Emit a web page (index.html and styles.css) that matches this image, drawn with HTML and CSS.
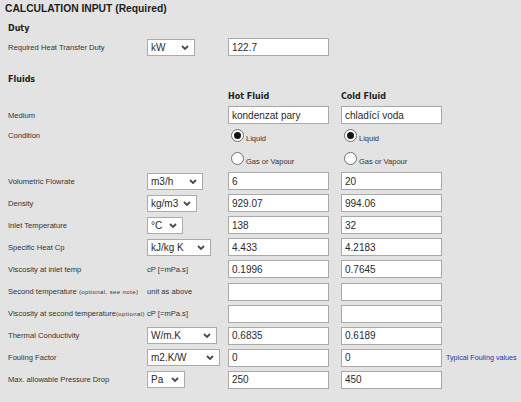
FILE: index.html
```html
<!DOCTYPE html>
<html>
<head>
<meta charset="utf-8">
<title>Calculation input</title>
<link rel="stylesheet" href="styles.css">
</head>
<body>
<div class="page">
  <h1 class="title">CALCULATION INPUT (Required)</h1>

  <h2 class="section section-duty">Duty</h2>
  <div class="row row-duty">
    <span class="label">Required Heat Transfer Duty</span>
    <span class="unit"><span class="select sel-48">kW<svg class="chev" viewBox="0 0 8 5"><path d="M1 1 L4 4 L7 1"/></svg></span></span>
    <span class="cell"><input class="field" type="text" value="122.7"></span>
  </div>

  <h2 class="section section-fluids">Fluids</h2>
  <div class="row row-head">
    <span></span><span></span>
    <span class="colhead">Hot Fluid</span>
    <span class="colhead">Cold Fluid</span>
  </div>
  <div class="row row-medium">
    <span class="label">Medium</span><span></span>
    <span class="cell"><input class="field" type="text" value="kondenzat pary"></span>
    <span class="cell"><input class="field" type="text" value="chladící voda"></span>
  </div>
  <div class="row row-radio">
    <span class="label">Condition</span><span></span>
    <span class="opt"><span class="radio checked"></span><span class="opt-text">Liquid</span></span>
    <span class="opt"><span class="radio checked"></span><span class="opt-text">Liquid</span></span>
  </div>
  <div class="row row-radio">
    <span></span><span></span>
    <span class="opt"><span class="radio"></span><span class="opt-text">Gas or Vapour</span></span>
    <span class="opt"><span class="radio"></span><span class="opt-text">Gas or Vapour</span></span>
  </div>

  <div class="props">
    <div class="row prop">
      <span class="label">Volumetric Flowrate</span>
      <span class="unit"><span class="select sel-56">m3/h<svg class="chev" viewBox="0 0 8 5"><path d="M1 1 L4 4 L7 1"/></svg></span></span>
      <span class="cell"><input class="field" type="text" value="6"></span>
      <span class="cell"><input class="field" type="text" value="20"></span>
    </div>
    <div class="row prop">
      <span class="label">Density</span>
      <span class="unit"><span class="select sel-50">kg/m3<svg class="chev" viewBox="0 0 8 5"><path d="M1 1 L4 4 L7 1"/></svg></span></span>
      <span class="cell"><input class="field" type="text" value="929.07"></span>
      <span class="cell"><input class="field" type="text" value="994.06"></span>
    </div>
    <div class="row prop">
      <span class="label">Inlet Temperature</span>
      <span class="unit"><span class="select sel-36">°C<svg class="chev" viewBox="0 0 8 5"><path d="M1 1 L4 4 L7 1"/></svg></span></span>
      <span class="cell"><input class="field" type="text" value="138"></span>
      <span class="cell"><input class="field" type="text" value="32"></span>
    </div>
    <div class="row prop">
      <span class="label">Specific Heat Cp</span>
      <span class="unit"><span class="select sel-64">kJ/kg K<svg class="chev" viewBox="0 0 8 5"><path d="M1 1 L4 4 L7 1"/></svg></span></span>
      <span class="cell"><input class="field" type="text" value="4.433"></span>
      <span class="cell"><input class="field" type="text" value="4.2183"></span>
    </div>
    <div class="row prop">
      <span class="label">Viscosity at inlet temp</span>
      <span class="unit-text">cP [=mPa.s]</span>
      <span class="cell"><input class="field" type="text" value="0.1996"></span>
      <span class="cell"><input class="field" type="text" value="0.7645"></span>
    </div>
    <div class="row prop">
      <span class="label">Second temperature <small class="note">(optional, see note)</small></span>
      <span class="unit-text">unit as above</span>
      <span class="cell"><input class="field" type="text" value=""></span>
      <span class="cell"><input class="field" type="text" value=""></span>
    </div>
    <div class="row prop">
      <span class="label">Viscosity at second temperature<small class="note">(optional)</small></span>
      <span class="unit-text">cP [=mPa.s]</span>
      <span class="cell"><input class="field" type="text" value=""></span>
      <span class="cell"><input class="field" type="text" value=""></span>
    </div>
    <div class="row prop">
      <span class="label">Thermal Conductivity</span>
      <span class="unit"><span class="select sel-70">W/m.K<svg class="chev" viewBox="0 0 8 5"><path d="M1 1 L4 4 L7 1"/></svg></span></span>
      <span class="cell"><input class="field" type="text" value="0.6835"></span>
      <span class="cell"><input class="field" type="text" value="0.6189"></span>
    </div>
    <div class="row prop">
      <span class="label">Fouling Factor</span>
      <span class="unit"><span class="select sel-73">m2.K/W<svg class="chev" viewBox="0 0 8 5"><path d="M1 1 L4 4 L7 1"/></svg></span></span>
      <span class="cell"><input class="field" type="text" value="0"></span>
      <span class="cell"><input class="field" type="text" value="0"></span>
      <a class="link" href="#">Typical Fouling values</a>
    </div>
    <div class="row prop">
      <span class="label">Max. allowable Pressure Drop</span>
      <span class="unit"><span class="select sel-38">Pa<svg class="chev" viewBox="0 0 8 5"><path d="M1 1 L4 4 L7 1"/></svg></span></span>
      <span class="cell"><input class="field" type="text" value="250"></span>
      <span class="cell"><input class="field" type="text" value="450"></span>
    </div>
  </div>
</div>
</body>
</html>
```

FILE: styles.css
```css
html, body {
  margin: 0;
  padding: 0;
  background: #e3e3e3;
}
body {
  width: 521px;
  height: 402px;
  overflow: hidden;
  color: #2a2a2a;
  font-family: "Liberation Sans", Arial, sans-serif;
}
.page {
  padding-left: 8px;
}
.title {
  margin: 0 0 0 -3px;
  height: 17px;
  line-height: 17px;
  font-family: "Liberation Sans", Arial, sans-serif;
  font-weight: bold;
  font-size: 10.3px;
  color: #1e1e1e;
}
.section {
  margin: 0;
  font-family: "DejaVu Sans", Verdana, sans-serif;
  font-weight: bold;
  font-size: 8px;
  color: #222;
}
.section-duty {
  height: 21px;
  line-height: 24px;
}
.section-fluids {
  margin-top: 14px;
  height: 18px;
  line-height: 20px;
}
.row {
  display: grid;
  grid-template-columns: 139px 81px 113px 103px auto;
  align-items: center;
  white-space: nowrap;
}
.row-duty { height: 18px; }
.row-head { height: 17px; line-height: 17px; }
.row-medium { height: 18px; margin-top: 1px; }
.row-radio { height: 23px; }
.props { margin-top: 0; }
.prop { height: 22.1px; }

.colhead {
  font-family: "DejaVu Sans", Verdana, sans-serif;
  font-weight: bold;
  font-size: 8px;
  color: #222;
}
.label, .unit-text {
  font-size: 7.6px;
  color: #333;
}
.note {
  font-size: 6px;
  letter-spacing: 0.4px;
}
.unit { display: flex; }
.select {
  box-sizing: border-box;
  height: 17px;
  display: flex;
  align-items: center;
  justify-content: space-between;
  padding: 0 5px 0 3px;
  background: #fff;
  border: 1px solid #ababab;
  font-size: 10px;
  color: #2a2a2a;
}
.sel-36 { width: 36px; }
.sel-38 { width: 38px; }
.sel-48 { width: 48px; }
.sel-50 { width: 50px; }
.sel-56 { width: 56px; }
.sel-64 { width: 64px; }
.sel-70 { width: 70px; }
.sel-73 { width: 73px; }
.chev {
  width: 8px;
  height: 5px;
  flex: none;
}
.chev path {
  fill: none;
  stroke: #4a4a4a;
  stroke-width: 1.8;
}
.cell { display: flex; }
.field {
  box-sizing: border-box;
  width: 101px;
  height: 18px;
  margin: 0;
  padding: 0 3px;
  border: 1px solid #a9a9a9;
  border-radius: 0;
  background: #fff;
  font-family: "Liberation Sans", Arial, sans-serif;
  font-size: 10px;
  color: #2a2a2a;
  outline: none;
}
.opt {
  display: flex;
  align-items: center;
  padding-left: 3px;
}
.radio {
  box-sizing: border-box;
  width: 13px;
  height: 13px;
  border-radius: 50%;
  border: 1px solid #6f6f6f;
  background: #fff;
  display: flex;
  align-items: center;
  justify-content: center;
  flex: none;
}
.radio.checked::after {
  content: "";
  width: 7px;
  height: 7px;
  border-radius: 50%;
  background: #141414;
}
.opt-text {
  font-size: 7.5px;
  color: #333;
  margin-left: 2px;
  padding-top: 6px;
}
.link {
  font-size: 7.2px;
  color: #2f2fa8;
  text-decoration: none;
  padding-left: 2px;
}
```
